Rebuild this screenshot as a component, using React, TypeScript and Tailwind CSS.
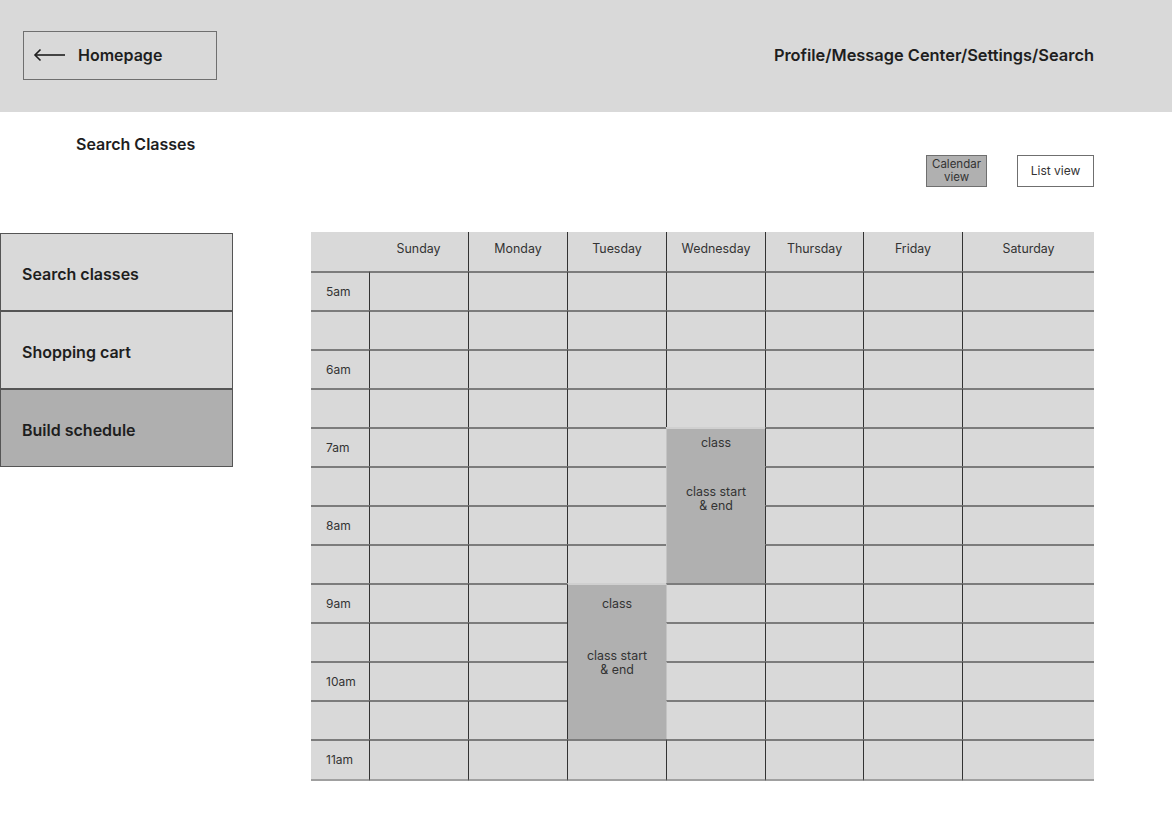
const days = ['Sunday', 'Monday', 'Tuesday', 'Wednesday', 'Thursday', 'Friday', 'Saturday']
const times = ['5am', '', '6am', '', '7am', '', '8am', '', '9am', '', '10am', '', '11am']

// block start: day index -> row index where a 4-row class block begins
const blocks: Record<number, number> = { 3: 4, 2: 8 }

function covered(day: number, row: number) {
  const start = blocks[day]
  return start !== undefined && row > start && row < start + 4
}

function ArrowLeft() {
  return (
    <svg width="33" height="14" viewBox="0 0 33 14" fill="none" stroke="#1e1e1e" strokeWidth="1.6">
      <path d="M32 7H2" />
      <path d="M7.5 1.5L2 7l5.5 5.5" />
    </svg>
  )
}

function Calendar() {
  const cells: React.ReactNode[] = []

  cells.push(<div key="h-0" className="bg-[#d9d9d9]" />)
  days.forEach((d, i) => {
    cells.push(
      <div
        key={`h-${d}`}
        className={`flex items-center justify-center bg-[#d9d9d9] pb-[4px] text-[12.4px] text-[#333] ${i > 0 ? 'border-l border-[#333]' : ''}`}
      >
        {d}
      </div>
    )
  })

  times.forEach((t, r) => {
    const last = r === times.length - 1
    cells.push(
      <div
        key={`t-${r}`}
        className={`flex items-center border-t-2 border-[#7c7c7c] bg-[#d9d9d9] pl-[15px] text-[12px] text-[#333] ${last ? 'border-b-2 border-b-[#a0a0a0]' : ''}`}
      >
        {t}
      </div>
    )
    days.forEach((_, d) => {
      if (covered(d, r)) return
      if (blocks[d] === r) {
        const tue = d === 2
        cells.push(
          <div
            key={`b-${d}`}
            className={`row-span-4 flex flex-col items-center border-t-2 border-t-[#d0d0d0] bg-[#b0b0b0] text-center text-[12.4px] leading-[14px] text-[#333] ${tue ? 'border-l border-l-[#333] pt-[12px]' : 'border-l border-l-[#c4c4c4] pt-[7px]'}`}
          >
            <span>class</span>
            <span className={tue ? 'mt-[38px]' : 'mt-[35px]'}>
              class start
              <br />& end
            </span>
          </div>
        )
        return
      }
      // cell sitting right of the Tuesday block gets a lighter side line
      const leftIsBlock = d === 3 && r >= blocks[2] && r < blocks[2] + 4
      cells.push(
        <div
          key={`c-${r}-${d}`}
          className={`border-t-2 border-t-[#7c7c7c] bg-[#d9d9d9] ${leftIsBlock ? 'border-l border-l-[#c4c4c4]' : 'border-l border-l-[#333]'} ${last ? 'border-b-2 border-b-[#a0a0a0]' : ''}`}
        />
      )
    })
  })

  return (
    <div className="grid grid-cols-[58px_99px_99px_99px_99px_98px_99px_132px] grid-rows-[39px_repeat(12,39px)_42px]">
      {cells}
    </div>
  )
}

export default function App() {
  return (
    <main className="min-h-[832px] w-[1172px] bg-white font-['Inter',sans-serif] text-[#1e1e1e]">
      <header className="flex h-[112px] items-start justify-between bg-[#d9d9d9] pl-[23px] pr-[78px] pt-[31px]">
        <button className="flex h-[49px] w-[194px] items-center gap-[12px] border border-[#6f6f6f] pb-[2px] pl-[9px]">
          <ArrowLeft />
          <span className="text-[16px] font-semibold">Homepage</span>
        </button>
        <nav className="mt-[12px] text-[16.4px] font-semibold">Profile/Message Center/Settings/Search</nav>
      </header>

      <h2 className="pl-[76px] pt-[22px] text-[16px] font-semibold leading-[20px]">Search Classes</h2>

      <div className="flex justify-end gap-[30px] pr-[78px] pt-[1px]">
        <button className="flex h-[32px] w-[61px] flex-col items-center justify-center border border-[#6f6f6f] bg-[#b0b0b0] text-[11.5px] leading-[13px] text-[#333]">
          <span>Calendar</span>
          <span>view</span>
        </button>
        <button className="flex h-[32px] w-[77px] items-center justify-center border border-[#6f6f6f] bg-white text-[12px] text-[#333]">
          List view
        </button>
      </div>

      <div className="mt-[45px] flex">
        <aside className="mt-[1px] flex h-[234px] w-[233px] flex-col border border-[#555]">
          <div className="flex h-[78px] items-center border-b-2 border-[#555] bg-[#d9d9d9] pl-[21px] pt-[3px] text-[16px] font-semibold">
            Search classes
          </div>
          <div className="flex h-[78px] items-center border-b-2 border-[#555] bg-[#d9d9d9] pl-[21px] pt-[3px] text-[16px] font-semibold">
            Shopping cart
          </div>
          <div className="flex flex-1 items-center bg-[#afafaf] pl-[21px] pt-[3px] text-[16px] font-semibold">
            Build schedule
          </div>
        </aside>
        <div className="ml-[78px]">
          <Calendar />
        </div>
      </div>
    </main>
  )
}
